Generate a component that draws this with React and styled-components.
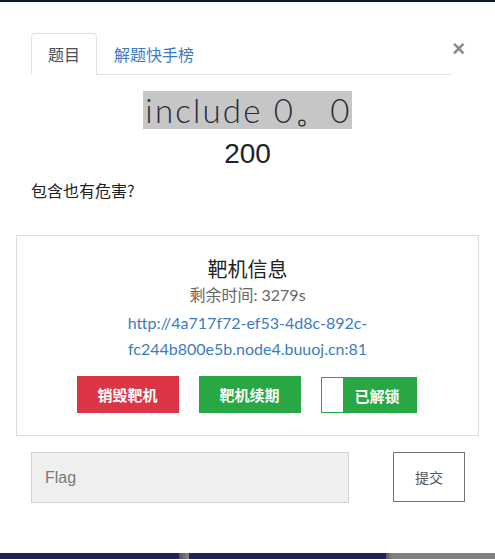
import styled, { createGlobalStyle } from 'styled-components';

const GlobalStyle = createGlobalStyle`
  html, body {
    margin: 0;
    padding: 0;
    background: #fff;
  }
  body {
    font-family: Lato, "Noto Sans CJK SC", sans-serif;
    color: #222;
  }
`;

const Page = styled.div`
  height: 559px;
  display: flex;
  flex-direction: column;
  overflow: hidden;
`;

const TopStrip = styled.div`
  height: 2px;
  background: #0b1738;
  flex-shrink: 0;
`;

const Modal = styled.div`
  flex: 1;
  position: relative;
  padding: 31px 16px 0;
`;

const TabBar = styled.ul`
  display: flex;
  list-style: none;
  margin: 0 28px 0 15px;
  padding: 0;
  border-bottom: 1px solid #dee2e6;
`;

const Tab = styled.li`
  height: 40px;
  padding: 0 16px;
  display: flex;
  align-items: center;
  font-size: 16px;
  font-family: "Noto Sans CJK SC", sans-serif;
  margin-bottom: -1px;
  border: 1px solid ${(p) => (p.active ? '#dee2e6' : 'transparent')};
  border-bottom-color: ${(p) => (p.active ? '#fff' : 'transparent')};
  border-radius: 4px 4px 0 0;
  background: ${(p) => (p.active ? '#fff' : 'transparent')};
  color: ${(p) => (p.active ? '#495057' : '#3a7bc8')};
`;

const Close = styled.button`
  position: absolute;
  top: 36px;
  right: 30px;
  border: none;
  background: none;
  padding: 0;
  color: #888;
  font-size: 22px;
  font-weight: 700;
  line-height: 1;
  font-family: "Liberation Sans", Arial, sans-serif;
  cursor: pointer;
`;

const TitleRow = styled.div`
  text-align: center;
  margin-top: 16px;
`;

const Title = styled.span`
  display: inline-block;
  background: #c6c6c6;
  color: #2a2a3a;
  font-family: Lato, sans-serif;
  font-weight: 300;
  font-size: 33px;
  letter-spacing: 2.2px;
  line-height: 38px;
  height: 38px;
  padding: 0 0 0 2px;
`;

const Score = styled.div`
  text-align: center;
  font-family: "Liberation Sans", Arial, sans-serif;
  font-size: 28px;
  line-height: 34px;
  margin-top: 8px;
  color: #222;
`;

const Description = styled.p`
  margin: 9px 15px 0;
  font-size: 16px;
  line-height: 20px;
  font-family: "Noto Sans CJK SC", sans-serif;
  color: #222;
`;

const Card = styled.div`
  margin-top: 35px;
  border: 1px solid #dcdcdc;
  padding: 20px 16px 22px;
  text-align: center;
`;

const CardTitle = styled.div`
  font-size: 20px;
  line-height: 26px;
  font-family: "Noto Sans CJK SC", sans-serif;
  color: #222;
`;

const Remaining = styled.div`
  font-size: 16px;
  line-height: 22px;
  margin-top: 2px;
  color: #666;
`;

const Link = styled.a`
  display: block;
  width: 260px;
  margin: 4px auto 0;
  font-size: 16px;
  line-height: 26px;
  color: #3b7bbf;
  text-decoration: none;
`;

const Actions = styled.div`
  display: flex;
  justify-content: center;
  gap: 20px;
  margin-top: 14px;
  margin-left: -2px;
`;

const ActionButton = styled.button`
  width: ${(p) => p.w || 102}px;
  height: 37px;
  border: none;
  border-radius: 0;
  background: ${(p) => p.bg};
  color: #fff;
  font-family: "Noto Sans CJK SC", sans-serif;
  font-weight: 700;
  font-size: 15px;
  padding: 0;
`;

const UnlockButton = styled.button`
  width: 96px;
  height: 36px;
  margin-top: 1px;
  border: 1px solid #28a745;
  background: #28a745;
  color: #fff;
  font-family: "Noto Sans CJK SC", sans-serif;
  font-weight: 700;
  font-size: 15px;
  padding: 0;
  display: flex;
  align-items: stretch;
`;

const Knob = styled.span`
  width: 21px;
  background: #fff;
`;

const UnlockLabel = styled.span`
  flex: 1;
  display: flex;
  align-items: center;
  justify-content: center;
  padding-right: 4px;
`;

const FlagRow = styled.div`
  display: flex;
  justify-content: space-between;
  margin: 16px 14px 0 15px;
`;

const FlagInput = styled.input`
  width: 318px;
  height: 51px;
  box-sizing: border-box;
  border: 1px solid #ced4da;
  background: #efefef;
  padding: 0 13px;
  font-size: 16px;
  font-family: "Liberation Sans", Arial, sans-serif;
  &::placeholder {
    color: #7a7a7a;
  }
`;

const SubmitButton = styled.button`
  width: 72px;
  height: 50px;
  border: 1px solid #6c757d;
  background: #fff;
  color: #555;
  font-size: 14px;
  font-family: "Noto Sans CJK SC", sans-serif;
`;

const BottomStrip = styled.div`
  height: 6px;
  flex-shrink: 0;
  display: flex;
`;

const Segment = styled.div`
  width: ${(p) => p.w}px;
  flex: ${(p) => (p.grow ? 1 : 'none')};
  background: ${(p) => p.bg};
`;

export default function App() {
  return (
    <Page>
      <GlobalStyle />
      <TopStrip />
      <Modal>
        <TabBar>
          <Tab active>题目</Tab>
          <Tab>解题快手榜</Tab>
        </TabBar>
        <Close aria-label="close">×</Close>
        <TitleRow>
          <Title>include 0。0</Title>
        </TitleRow>
        <Score>200</Score>
        <Description>包含也有危害?</Description>
        <Card>
          <CardTitle>靶机信息</CardTitle>
          <Remaining>剩余时间: 3279s</Remaining>
          <Link href="#">http://4a717f72-ef53-4d8c-892c-fc244b800e5b.node4.buuoj.cn:81</Link>
          <Actions>
            <ActionButton bg="#dc3545">销毁靶机</ActionButton>
            <ActionButton bg="#28a745">靶机续期</ActionButton>
            <UnlockButton>
              <Knob />
              <UnlockLabel>已解锁</UnlockLabel>
            </UnlockButton>
          </Actions>
        </Card>
        <FlagRow>
          <FlagInput placeholder="Flag" />
          <SubmitButton>提交</SubmitButton>
        </FlagRow>
      </Modal>
      <BottomStrip>
        <Segment w={179} bg="#1e2556" />
        <Segment w={10} bg="linear-gradient(90deg, #555, #888)" />
        <Segment w={197} bg="#1e2556" />
        <Segment grow bg="linear-gradient(90deg, #555 0, #808080 6px)" />
      </BottomStrip>
    </Page>
  );
}
